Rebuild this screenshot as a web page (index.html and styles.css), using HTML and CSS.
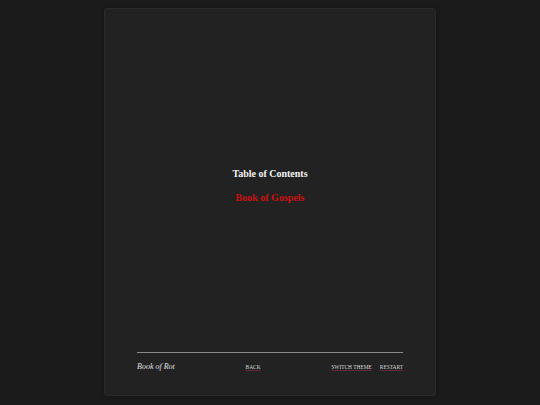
FILE: index.html
```html
<!DOCTYPE html>
<html>
<head>
<meta charset="utf-8">
<link rel="stylesheet" href="styles.css">
</head>
<body>
<div class="page">
  <main class="toc">
    <h1 class="toc-title">Table of Contents</h1>
    <a class="toc-link" href="#">Book of Gospels</a>
  </main>
  <footer class="footer">
    <span class="brand">Book of Rot</span>
    <a class="nav" href="#">Back</a>
    <span class="nav-group">
      <a class="nav" href="#">Switch Theme</a>
      <a class="nav" href="#">Restart</a>
    </span>
  </footer>
</div>
</body>
</html>
```

FILE: styles.css
```css
html, body {
  margin: 0;
  padding: 0;
}
body {
  background: #1b1b1b;
  font-family: "Liberation Serif", "DejaVu Serif", serif;
  color: #e8e8e8;
  height: 405px;
  display: flex;
  justify-content: center;
  padding-top: 8px;
  box-sizing: border-box;
}
.page {
  width: 332px;
  height: 388px;
  box-sizing: border-box;
  background: #222222;
  border: 1px solid #2a2a2a;
  border-radius: 3px;
  box-shadow: 0 0 4px rgba(0,0,0,0.35);
  display: flex;
  flex-direction: column;
  padding: 10px 32px 24px;
}
.toc {
  flex: 1;
  display: flex;
  flex-direction: column;
  align-items: center;
  justify-content: center;
  gap: 13px;
}
.toc-title {
  margin: 0;
  font-size: 10px;
  font-weight: bold;
  color: #f2f2f2;
}
.toc-link {
  font-size: 10px;
  font-weight: bold;
  color: #cc1111;
  text-decoration: none;
}
.footer {
  border-top: 1px solid #8a8a8a;
  padding-top: 9px;
  display: flex;
  justify-content: space-between;
  align-items: center;
}
.brand {
  font-style: italic;
  font-size: 8px;
  color: #e0e0e0;
}
.nav-group {
  display: flex;
  gap: 8px;
}
.nav {
  font-size: 5.4px;
  text-transform: uppercase;
  color: #d8d8d8;
  text-decoration: underline;
  text-decoration-color: #64283f;
}
```
